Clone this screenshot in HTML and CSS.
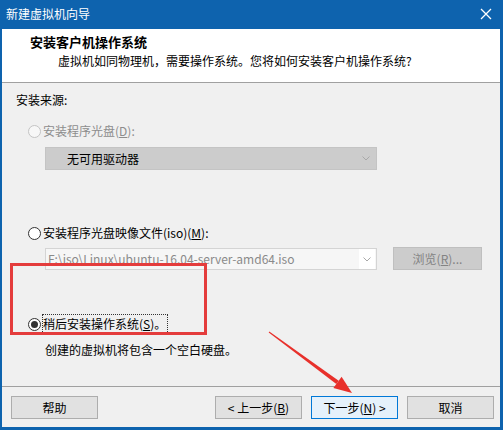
FILE: index.html
```html
<!DOCTYPE html>
<html lang="zh-CN">
<head>
<meta charset="utf-8">
<title>新建虚拟机向导</title>
<link rel="stylesheet" href="styles.css">
</head>
<body>
<div class="window">
  <div class="titlebar">
    <span class="title">新建虚拟机向导</span>
    <svg class="close" width="12" height="12" viewBox="0 0 12 12"><path d="M1 1L11 11M11 1L1 11" stroke="#fff" stroke-width="1.3" fill="none"/></svg>
  </div>
  <div class="header">
    <div class="h-title">安装客户机操作系统</div>
    <div class="h-sub">虚拟机如同物理机，需要操作系统。您将如何安装客户机操作系统?</div>
  </div>
  <div class="main">
    <div class="section-label">安装来源:</div>
    <div class="radio-row row1 disabled"><span class="radio"></span><span class="label">安装程序光盘(<u>D</u>):</span></div>
    <div class="combo combo-disabled combo1">
      <span class="combo-text">无可用驱动器</span>
      <svg class="chev" width="8" height="5" viewBox="0 0 8 5"><path d="M0.5 0.5L4 4L7.5 0.5" stroke="#a8a8a8" fill="none"/></svg>
    </div>
    <div class="radio-row row2"><span class="radio"></span><span class="label">安装程序光盘映像文件(iso)(<u>M</u>):</span></div>
    <div class="combo-row">
      <div class="combo combo-iso">
        <span class="combo-text">F:\iso\Linux\ubuntu-16.04-server-amd64.iso</span>
        <span class="combo-btn"><svg class="chev" width="8" height="5" viewBox="0 0 8 5"><path d="M0.5 0.5L4 4L7.5 0.5" stroke="#a8a8a8" fill="none"/></svg></span>
      </div>
      <div class="btn btn-disabled">浏览(<u>R</u>)...</div>
    </div>
    <div class="radio-row row3"><span class="radio checked"></span><span class="label focus">稍后安装操作系统(<u>S</u>)。</span></div>
    <div class="note">创建的虚拟机将包含一个空白硬盘。</div>
  </div>
  <div class="footer">
    <div class="btn">帮助</div>
    <div class="spacer"></div>
    <div class="btn">&lt; 上一步(<u>B</u>)</div>
    <div class="btn btn-default">下一步(<u>N</u>) &gt;</div>
    <div class="btn">取消</div>
  </div>
  <div class="highlight-box"></div>
  <svg class="red-arrow" width="503" height="430" viewBox="0 0 503 430">
    <polygon points="268.7,332.4 269.3,331.6 338.7,380.7 336.3,383.9" fill="#e8302b"/>
    <polygon points="352,393 333.4,387.9 341.6,376.7" fill="#e8302b"/>
  </svg>
</div>
</body>
</html>
```
FILE: styles.css
```css
html, body {
  margin: 0;
  padding: 0;
}
body {
  font-family: "Noto Sans CJK SC", "Noto Sans", sans-serif;
  font-size: 12px;
  color: #000;
  background: #2d7fc4;
}
u {
  text-decoration: underline;
  text-underline-offset: 1px;
}
.window {
  position: relative;
  width: 503px;
  height: 430px;
  box-sizing: border-box;
  background: #0e63ae;
  padding: 0 3px 3px 2px;
  display: flex;
  flex-direction: column;
  overflow: hidden;
}
.titlebar {
  height: 29px;
  flex: none;
  display: flex;
  align-items: center;
  justify-content: space-between;
  color: #fff;
  padding: 0 8px 2px 4px;
  box-sizing: border-box;
}
.title {
  font-size: 12px;
  line-height: 16px;
}
.close {
  display: block;
}
.header {
  height: 54px;
  flex: none;
  background: #fff;
  border-bottom: 1px solid #a0a0a0;
  box-sizing: border-box;
  padding-top: 4px;
}
.h-title {
  font-weight: bold;
  font-size: 13px;
  line-height: 18px;
  padding-left: 28px;
}
.h-sub {
  line-height: 16px;
  margin-top: 2px;
  padding-left: 56px;
}
.main {
  flex: 1;
  background: #f0f0f0;
  padding-left: 14px;
  display: flex;
  flex-direction: column;
  align-items: flex-start;
}
.section-label {
  line-height: 16px;
  height: 16px;
  margin-top: 9px;
}
.radio-row {
  display: flex;
  align-items: center;
  height: 16px;
  margin-left: 12px;
  gap: 2px;
}
.row1 { margin-top: 15px; }
.row2 { margin-top: 55px; }
.row3 { margin-top: 46px; }
.radio {
  width: 13px;
  height: 13px;
  box-sizing: border-box;
  border-radius: 50%;
  border: 1px solid #333;
  background: #fff;
  position: relative;
  flex: none;
}
.radio.checked::after {
  content: "";
  position: absolute;
  left: 2px;
  top: 2px;
  width: 7px;
  height: 7px;
  border-radius: 50%;
  background: #333;
}
.disabled .radio {
  border-color: #c4c4c4;
  background: #f7f7f7;
}
.disabled .label {
  color: #8d8d8d;
}
.label {
  line-height: 16px;
}
.label.focus {
  outline: 1px dotted #333;
  outline-offset: 0;
  padding: 1px 1px 1px 0;
}
.combo {
  display: flex;
  align-items: center;
  box-sizing: border-box;
  margin-left: 29px;
  width: 332px;
}
.combo1 {
  margin-top: 8px;
  height: 23px;
  background: #cccccc;
  border: 1px solid #c4c4c4;
  padding-left: 21px;
  padding-right: 6px;
  justify-content: space-between;
}
.combo-text {
  line-height: 16px;
  white-space: nowrap;
}
.chev {
  display: block;
}
.combo-row {
  display: flex;
  align-items: flex-start;
  margin-top: 6px;
  gap: 16px;
}
.combo-iso {
  height: 22px;
  margin-top: 1px;
  background: #f6f6f6;
  border: 1px solid #d4d4d4;
  padding-left: 2px;
  justify-content: space-between;
}
.combo-iso .combo-text {
  color: #8a8a8a;
}
.combo-btn {
  width: 16px;
  height: 20px;
  background: #fff;
  display: flex;
  align-items: center;
  justify-content: center;
  margin-right: 1px;
}
.btn {
  width: 87px;
  height: 23px;
  box-sizing: border-box;
  border: 1px solid #adadad;
  background: #e1e1e1;
  display: flex;
  align-items: center;
  justify-content: center;
  line-height: 16px;
  white-space: nowrap;
}
.btn-disabled {
  width: 89px;
  background: #cccccc;
  border-color: #bfbfbf;
  color: #838383;
}
.btn-default {
  border-color: #0078d7;
  background: #e5f1fb;
}
.note {
  margin-top: 10px;
  margin-left: 29px;
  line-height: 16px;
}
.footer {
  height: 41px;
  flex: none;
  background: #f0f0f0;
  border-top: 1px solid #a0a0a0;
  box-sizing: border-box;
  display: flex;
  align-items: flex-start;
  padding: 9px 6px 0 9px;
  gap: 9px;
}
.footer .spacer {
  flex: 1;
}
.highlight-box {
  position: absolute;
  left: 10px;
  top: 263px;
  width: 197px;
  height: 72px;
  box-sizing: border-box;
  border: 3px solid #e43c3c;
}
.red-arrow {
  position: absolute;
  left: 0;
  top: 0;
  pointer-events: none;
}
```
